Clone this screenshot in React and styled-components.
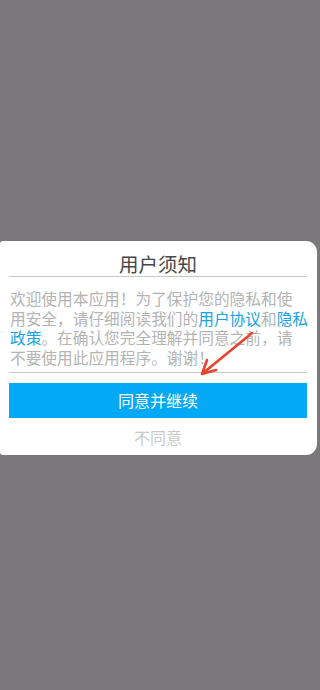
import React from "react";
import styled, { createGlobalStyle } from "styled-components";

const Global = createGlobalStyle`
  html, body { margin: 0; padding: 0; background: #7a787a; }
  body { font-family: "Noto Sans CJK SC", "Noto Sans", sans-serif; }
`;

const Screen = styled.div`
  min-height: 690px;
  padding-top: 241px;
  box-sizing: border-box;
  background: #7a787a;
`;

const Card = styled.div`
  position: relative;
  width: 317px;
  box-sizing: border-box;
  background: #fff;
  border-radius: 3px 11px 11px 3px;
  padding: 0 10px 6px 9px;
  display: flex;
  flex-direction: column;
`;

const Title = styled.div`
  padding-top: 11px;
  line-height: 24px;
  font-size: 19.5px;
  color: #474747;
  text-align: center;
  border-bottom: 1.5px solid #c6c6c6;
`;

const Body = styled.div`
  padding: 12px 0 5px 1px;
  font-size: 15.7px;
  line-height: 19.5px;
  color: #b4b4b4;
  white-space: nowrap;
  border-bottom: 1.5px solid #c6c6c6;
`;

const Link = styled.span`
  color: #18a2e6;
`;

const Primary = styled.button`
  margin-top: 10px;
  height: 35px;
  border: none;
  padding: 0;
  background: #03a9f4;
  color: #fff;
  font-family: inherit;
  font-size: 16px;
  line-height: 35px;
`;

const Secondary = styled.div`
  margin-top: 7px;
  line-height: 24px;
  font-size: 16px;
  color: #c9c9c9;
  text-align: center;
`;

const Arrow = styled.svg`
  position: absolute;
  left: 195px;
  top: 86px;
`;

export default function App() {
  return (
    <>
      <Global />
      <Screen>
        <Card>
          <Title>用户须知</Title>
          <Body>
            欢迎使用本应用！为了保护您的隐私和使
            <br />
            用安全，请仔细阅读我们的<Link>用户协议</Link>和<Link>隐私</Link>
            <br />
            <Link>政策</Link>。在确认您完全理解并同意之前，请
            <br />
            不要使用此应用程序。谢谢！
          </Body>
          <Primary>同意并继续</Primary>
          <Secondary>不同意</Secondary>
          <Arrow width="64" height="54" viewBox="0 0 64 54">
            <path
              d="M57 6 L7 47 M7 47 L12 33 M7 47 L21 43"
              stroke="#e8432d"
              strokeWidth="2.6"
              strokeLinecap="round"
              strokeLinejoin="round"
              fill="none"
            />
          </Arrow>
        </Card>
      </Screen>
    </>
  );
}
